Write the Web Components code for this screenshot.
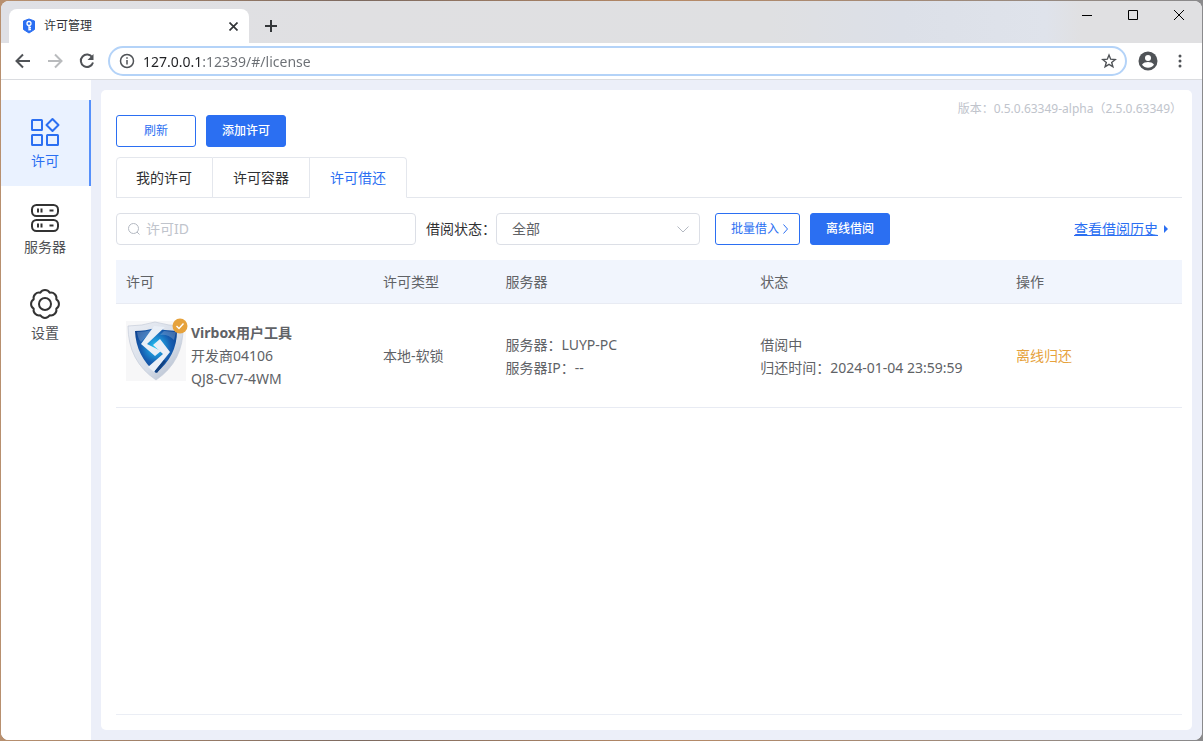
<!DOCTYPE html>
<html lang="zh-CN">
<head>
<meta charset="utf-8">
<title>许可管理</title>
<style>
html, body { height: 100%; }
body {
  margin: 0; padding: 1px; box-sizing: border-box; overflow: hidden;
  background: linear-gradient(90deg, #b8906f, #7d6a60 30%, #b78a66 55%, #8a8a8c);
  font-family: "Noto Sans", "Noto Sans CJK SC", sans-serif; font-size: 14px; line-height: 20px; color: #606266;
}
</style>
</head>
<body>
<browser-window>
  <browser-tab slot="tabs">许可管理</browser-tab>
  <address-bar slot="toolbar"></address-bar>
  <license-app>
    <side-nav slot="nav">
      <nav-item active>
        <svg slot="icon" width="30" height="30" viewBox="0 0 30 30" fill="none" stroke="#2b6ff2" stroke-width="2" stroke-linejoin="round"><rect x="2" y="3" width="10" height="10" rx=".5"/><rect x="2" y="18" width="10" height="10" rx=".5"/><rect x="17" y="18" width="11" height="10" rx=".5"/><path d="M22.500 2 28.500 8l-6 6-6-6z"/></svg>
        许可
      </nav-item>
      <nav-item>
        <svg slot="icon" width="30" height="30" viewBox="0 0 30 30" fill="none" stroke="#333" stroke-width="2"><rect x="2" y="2" width="26" height="11" rx="4.500"/><rect x="2" y="17" width="26" height="11" rx="4.500"/><path d="M8 5.500v4m3.500-4v4m8-2h4M8 20.500v4m3.500-4v4m8-2h4"/></svg>
        服务器
      </nav-item>
      <nav-item>
        <svg slot="icon" width="30" height="30" viewBox="0 0 30 30" fill="none" stroke="#333" stroke-width="2" stroke-linejoin="round"><circle cx="15" cy="15" r="6"/><path d="M26.300 19.700A5.500 5.500 0 0 1 19.700 26.300 5.500 5.500 0 0 1 10.300 26.300 5.500 5.500 0 0 1 3.700 19.700 5.500 5.500 0 0 1 3.700 10.300 5.500 5.500 0 0 1 10.300 3.700 5.500 5.500 0 0 1 19.700 3.700 5.500 5.500 0 0 1 26.300 10.300 5.500 5.500 0 0 1 26.300 19.700z"/></svg>
        设置
      </nav-item>
    </side-nav>
    <license-page></license-page>
  </license-app>
</browser-window>

<script>
function define(name, html) {
  const template = document.createElement('template');
  template.innerHTML = html;
  customElements.define(name, class extends HTMLElement {
    constructor() {
      super();
      this.attachShadow({ mode: 'open' }).append(template.content.cloneNode(true));
    }
  });
}

define('browser-window', `
<style>
:host { display: flex; flex-direction: column; height: 100%; box-sizing: border-box; background: #fff; border-radius: 8px; overflow: hidden; }
.strip { display: flex; align-items: flex-end; height: 42px; flex: none; background: linear-gradient(90deg, #dfe0e5, #e0e0e2 30%, #dfe0e2 64%, #dce0e8 75%, #dfe3eb 87%, #e0e0e2 90%); padding-left: 8px; }
button { border: 0; background: none; padding: 0; display: grid; place-items: center; }
.plus { width: 44px; height: 34px; }
.controls { margin-left: auto; align-self: flex-start; display: flex; }
.controls button { width: 46px; height: 28px; }
.toolbar { flex: none; border-bottom: 1px solid #dadce0; }
.view { flex: 1; min-height: 0; display: flex; }
</style>
<div class="strip">
  <slot name="tabs"></slot>
  <button class="plus" aria-label="新标签页"><svg width="14" height="14" fill="none" stroke="#333639" stroke-width="2"><path d="M7 1v12M1 7h12"/></svg></button>
  <div class="controls">
    <button aria-label="最小化"><svg width="10" height="10" stroke="#000"><path d="M0 5.500h10"/></svg></button>
    <button aria-label="最大化"><svg width="10" height="10" fill="none" stroke="#000"><path d="M.5.5h9v9h-9z"/></svg></button>
    <button aria-label="关闭"><svg width="10" height="10" stroke="#000"><path d="m0 0 10 10M10 0 0 10"/></svg></button>
  </div>
</div>
<div class="toolbar"><slot name="toolbar"></slot></div>
<div class="view"><slot></slot></div>`);

define('browser-tab', `
<style>
:host { display: flex; align-items: center; box-sizing: border-box; width: 240px; height: 34px; padding: 0 8px 0 12px; gap: 7px; background: #fff; border-radius: 8px 8px 0 0; color: #303236; font-size: 12px; }
span { flex: 1; }
button { width: 16px; height: 16px; border: 0; padding: 0; background: none; display: grid; place-items: center; }
</style>
<svg width="16" height="16" viewBox="0 0 16 16"><path d="M8 1 13.500 3v8.500L8 15l-5.500-3.500V3z" fill="#2b6ff2" stroke="#2b6ff2" stroke-linejoin="round"/><g fill="none" stroke="#fff" stroke-width="1.300"><circle cx="8" cy="5.500" r="2"/><path d="M8 7.500v5M8 9.500h2M8 11.500h2"/></g></svg>
<span><slot></slot></span>
<button aria-label="关闭标签页"><svg width="9" height="9" stroke="#333639" stroke-width="1.700"><path d="m.5.5 8 8M8.500.5l-8 8"/></svg></button>`);

define('address-bar', `
<style>
:host { display: flex; align-items: center; height: 36px; padding: 0 6px; }
button { border: 0; background: none; padding: 0; width: 32px; height: 28px; display: grid; place-items: center; flex: none; }
.omni { flex: 1; min-width: 0; display: flex; align-items: center; gap: 8px; box-sizing: border-box; height: 30px; margin: 0 5px; padding: 0 0 0 9px; border: 2px solid #b4d3f8; border-radius: 15px; }
input { flex: 1; min-width: 0; border: 0; outline: 0; padding: 0; height: 24px; font: inherit; color: #202124;
  background: linear-gradient(90deg, #202124 59px, #6b6f74 59px); -webkit-background-clip: text; background-clip: text; -webkit-text-fill-color: transparent; }
</style>
<button aria-label="后退"><svg width="16" height="16" fill="none" stroke="#505357" stroke-width="2"><path d="M15 8H2M8 1.500 1.500 8 8 14.500"/></svg></button>
<button aria-label="前进"><svg width="16" height="16" fill="none" stroke="#b9bbbd" stroke-width="2"><path d="M1 8h13M8 1.500 14.500 8 8 14.500"/></svg></button>
<button aria-label="重新加载"><svg width="16" height="16" fill="none" stroke="#505357" stroke-width="2"><path d="M13.300 4.500A6.200 6.200 0 1 0 14 9.500"/><path d="M14.500 1v6h-6z" fill="#505357" stroke="none"/></svg></button>
<div class="omni">
  <svg width="16" height="16" viewBox="0 0 16 16" fill="none" stroke="#505357" stroke-width="1.500"><circle cx="8" cy="8" r="6.500"/><path d="M8 7v4.500M8 4.200v1.600"/></svg>
  <input aria-label="地址" value="127.0.0.1:12339/#/license">
  <button aria-label="收藏"><svg width="16" height="16" viewBox="0 0 16 16" fill="none" stroke="#505357" stroke-width="1.400"><path d="m8 2 1.700 4.200 4.500.3-3.500 2.900 1.200 4.400L8 11.400l-3.900 2.400 1.200-4.400L1.800 6.500l4.500-.3z"/></svg></button>
</div>
<button aria-label="用户"><svg width="20" height="20" viewBox="0 0 20 20"><circle cx="10" cy="10" r="9.500" fill="#505357"/><circle cx="10" cy="7" r="3" fill="#fff"/><path d="M4 13.700c1-2 4-2.700 6-2.700s5 .7 6 2.700c-1.500 2-3.500 3-6 3s-4.500-1-6-3z" fill="#fff"/></svg></button>
<button aria-label="菜单"><svg width="4" height="14" fill="#505357"><circle cx="2" cy="2" r="1.500"/><circle cx="2" cy="7" r="1.500"/><circle cx="2" cy="12" r="1.500"/></svg></button>`);

define('license-app', `
<style>
:host { flex: 1; min-width: 0; display: flex; background: #eceff9; }
main { flex: 1; min-width: 0; padding: 10px; display: flex; }
</style>
<slot name="nav"></slot><main><slot></slot></main>`);

define('side-nav', `
<style>:host { flex: none; width: 90px; box-sizing: border-box; padding-top: 20px; background: #fff; display: block; }</style>
<nav><slot></slot></nav>`);

define('nav-item', `
<style>
:host { display: block; }
a { box-sizing: border-box; height: 86px; padding-top: 17px; display: flex; flex-direction: column; align-items: center; gap: 4px; text-decoration: none; color: #505256; border-right: 2px solid transparent; }
:host([active]) a { background: #eaf2ff; color: #2b6ff2; border-color: #5690fb; }
</style>
<a href="#/"><slot name="icon"></slot><span><slot></slot></span></a>`);

define('action-button', `
<style>
:host { display: block; }
button { box-sizing: border-box; height: 32px; padding: 0 15px; min-width: 80px; display: flex; align-items: center; justify-content: center; gap: 4px; border: 1px solid #2b6ff2; border-radius: 3px; background: #fff; color: #2b6ff2; font: inherit; font-size: 12px; white-space: nowrap; }
:host([primary]) button { background: #2b6ff2; color: #fff; font-weight: 500; }
:host([arrow]) button { padding-right: 11px; }
</style>
<button><slot></slot></button>`);

define('app-badge', `
<style>
:host { display: block; position: relative; width: 60px; height: 60px; background: #f7f7f8; }
.check { position: absolute; top: -3px; right: -2px; }
svg { display: block; }
</style>
<svg width="60" height="60" viewBox="0 0 60 60">
  <defs>
    <linearGradient id="rim" x2="1" y2="1"><stop stop-color="#eceff5"/><stop offset=".6" stop-color="#d5dce7"/><stop offset="1" stop-color="#a9b4c6"/></linearGradient>
    <radialGradient id="blue" cx=".5" cy=".42" r=".6"><stop stop-color="#25d0f5"/><stop offset=".25" stop-color="#1f9bdc"/><stop offset=".6" stop-color="#165db0"/><stop offset="1" stop-color="#0c3f8c"/></radialGradient>
  </defs>
  <path d="M2 5Q16 5 29 1 43 5 57 5 58 40 30 59 2 40 2 5z" fill="url(#rim)" stroke="#c4ccd9" stroke-width=".7"/>
  <path d="M9 10Q20 10 29 7 40 10 51 10 51 35 30 52 10 35 9 10z" fill="url(#blue)"/>
  <path d="M11 11Q19 11 26 9L15 21q-3-3-4-10zM38 10l12 1-2 8q-6-6-14-5z" fill="#fff" opacity=".2"/>
  <path d="M28 5 15 23 29 35 35 30 31 28 21 23 39 6z" fill="#e9eff7"/>
  <path d="M34 18 44 31 28 51 22 46 37 33 27 24z" fill="#e9eff7"/>
  <path d="m29 50 9-11 2 1-9 12z" fill="#12417f"/>
</svg>
<svg class="check" width="16" height="16" viewBox="0 0 16 16"><circle cx="8" cy="8" r="7.500" fill="#e6a23c"/><path d="m4.500 8 2.500 2.500 4.500-5" fill="none" stroke="#fff" stroke-width="1.400"/></svg>`);

define('license-table', `
<style>
:host { display: block; margin-top: 15px; }
table { width: 100%; border-collapse: separate; border-spacing: 0; table-layout: fixed; }
th, td { text-align: left; font-weight: 400; padding: 0 10px; border-bottom: 1px solid #e8ebf3; }
th { height: 43px; background: #f1f5fd; }
td { height: 103px; line-height: 23px; }
.c1 { width: 24.100%; } .c2 { width: 11.500%; } .c3 { width: 23.900%; } .c4 { width: 24%; }
.product { display: flex; gap: 5px; align-items: center; }
app-badge { margin-top: -10px; flex: none; }
a { color: #e6a23c; text-decoration: none; }
</style>
<table>
  <colgroup><col class="c1"><col class="c2"><col class="c3"><col class="c4"><col></colgroup>
  <thead><tr><th>许可</th><th>许可类型</th><th>服务器</th><th>状态</th><th>操作</th></tr></thead>
  <tbody><tr>
    <td><div class="product"><app-badge></app-badge><div><b>Virbox用户工具</b><br>开发商04106<br>QJ8-CV7-4WM</div></div></td>
    <td>本地-软锁</td>
    <td>服务器：LUYP-PC<br>服务器IP：--</td>
    <td>借阅中<br>归还时间：2024-01-04 23:59:59</td>
    <td><a href="#/return">离线归还</a></td>
  </tr></tbody>
</table>`);

define('license-tabs', `
<style>
:host { display: block; margin-top: 10px; }
div { display: flex; border-bottom: 1px solid #e4e7ed; }
button { box-sizing: border-box; height: 41px; margin-bottom: -1px; padding: 0 20px; border: 1px solid #e4e7ed; border-left: 0; background: #fff; color: #303133; font: inherit; }
button:first-child { padding-left: 19px; border-left: 1px solid #e4e7ed; border-radius: 4px 0 0 0; }
button:last-child { border-radius: 0 4px 0 0; }
[aria-selected=true] { color: #2b6ff2; border-bottom-color: #fff; }
</style>
<div role="tablist"><button role="tab">我的许可</button><button role="tab">许可容器</button><button role="tab" aria-selected="true">许可借还</button></div>`);

define('license-filter', `
<style>
:host { display: flex; align-items: center; margin-top: 15px; gap: 10px; }
.search { flex: 0 1 300px; box-sizing: border-box; height: 32px; display: flex; align-items: center; gap: 5px; padding: 0 10px; border: 1px solid #dcdfe6; border-radius: 4px; }
input { flex: 1; min-width: 0; border: 0; outline: 0; padding: 0; font: inherit; background: none; }
input::placeholder { color: #c0c4cc; }
label { color: #303133; white-space: nowrap; width: 60px; }
.pick { display: grid; width: 204px; margin-right: 5px; align-items: center; }
.pick > * { grid-area: 1 / 1; }
.pick svg { justify-self: end; margin-right: 11px; pointer-events: none; }
select { appearance: none; width: 100%; height: 32px; padding: 0 15px; border: 1px solid #dcdfe6; border-radius: 4px; background: #fff; color: #606266; font: inherit; }
.history { margin-left: auto; margin-right: 13px; display: flex; align-items: center; gap: 5px; color: #2b6ff2; text-decoration: none; white-space: nowrap; }
.history span { text-decoration: underline; }
</style>
<div class="search">
  <svg width="14" height="14" fill="none" stroke="#b4b9c2"><circle cx="6.500" cy="6.500" r="5"/><path d="m10 10 2.500 2.500"/></svg>
  <input aria-label="许可ID" placeholder="许可ID">
</div>
<label for="state">借阅状态：</label>
<div class="pick">
  <select id="state"><option>全部</option></select>
  <svg width="12" height="7" fill="none" stroke="#b4b9c2"><path d="m.5.5 5.500 5.500 5.500-5.500"/></svg>
</div>
<action-button arrow>批量借入<svg width="5" height="10" fill="none" stroke="#2b6ff2"><path d="m.5.5 4 4.500-4 4.500"/></svg></action-button>
<action-button primary>离线借阅</action-button>
<a class="history" href="#/history"><span>查看借阅历史</span><svg width="6" height="10"><path d="m1 1 4 4-4 4z" fill="#2b6ff2"/></svg></a>`);

define('license-page', `
<style>
:host { flex: 1; min-width: 0; box-sizing: border-box; background: #fff; border-radius: 5px; padding: 9px 10px 15px 15px; display: flex; flex-direction: column; }
header { display: flex; justify-content: space-between; align-items: flex-start; }
.actions { display: flex; gap: 10px; padding-top: 16px; }
.version { font-size: 12px; color: #c0c4cc; }
footer { margin-top: auto; border-top: 1px solid #ebeef5; }
</style>
<header>
  <div class="actions"><action-button>刷新</action-button><action-button primary>添加许可</action-button></div>
  <div class="version">版本：0.5.0.63349-alpha（2.5.0.63349）</div>
</header>
<license-tabs></license-tabs>
<license-filter></license-filter>
<license-table></license-table>
<footer></footer>`);
</script>
</body>
</html>
